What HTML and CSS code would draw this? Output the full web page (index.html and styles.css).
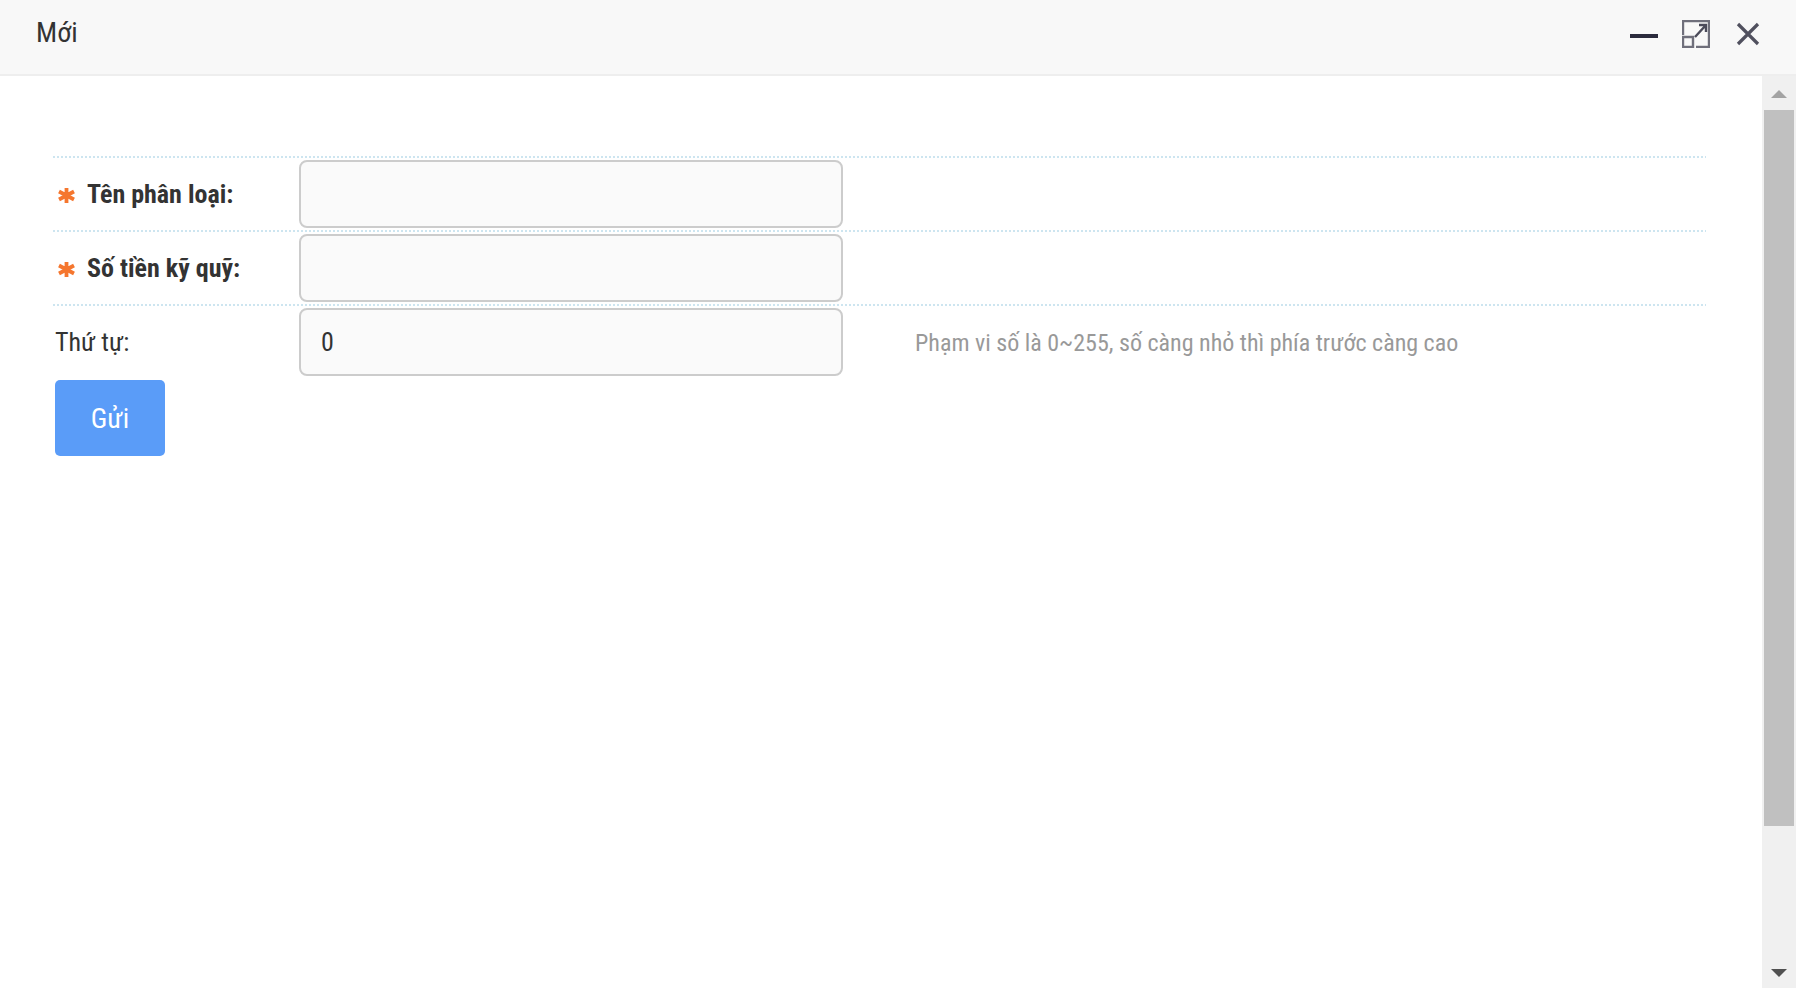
FILE: index.html
```html
<!DOCTYPE html>
<html lang="vi">
<head>
<meta charset="utf-8">
<title>Mới</title>
<link rel="stylesheet" href="styles.css">
</head>
<body>
<div class="dialog">
  <header class="titlebar">
    <span class="title">Mới</span>
    <div class="actions">
      <svg class="icon" viewBox="0 0 28 28"><path d="M0 16h28" stroke="#2b2b3d" stroke-width="4" fill="none"/></svg>
      <svg class="icon" viewBox="0 0 28 28" fill="none" stroke="#6f6f7b" stroke-width="2.4"><path d="M1 15V1h26v26H14"/><path d="M1 17h10v10H1z"/><path d="M13 17L24 5M17 5h7v7" stroke="#4b4b5a"/></svg>
      <svg class="icon close" viewBox="0 0 24 24" fill="none" stroke="#50505e" stroke-width="3.2"><path d="M2 2l20 20M22 2L2 22"/></svg>
    </div>
  </header>
  <div class="body">
    <main class="content">
      <form class="form">
        <div class="row">
          <label class="label strong"><svg class="star" viewBox="0 0 17 15" fill="none" stroke="#f5762e" stroke-width="3.800"><path d="M8.500 0V15M1 3.500L16 11.500M16 3.500L1 11.500"/></svg>Tên phân loại:</label>
          <input class="input" type="text">
        </div>
        <div class="row">
          <label class="label strong"><svg class="star" viewBox="0 0 17 15" fill="none" stroke="#f5762e" stroke-width="3.800"><path d="M8.500 0V15M1 3.500L16 11.500M16 3.500L1 11.500"/></svg>Số tiền kỹ quỹ:</label>
          <input class="input" type="text">
        </div>
        <div class="row">
          <label class="label">Thứ tự:</label>
          <input class="input" type="text" value="0">
          <span class="hint">Phạm vi số là 0~255, số càng nhỏ thì phía trước càng cao</span>
        </div>
        <button class="submit" type="button">Gửi</button>
      </form>
    </main>
    <div class="scrollbar">
      <span class="arrow up"></span>
      <span class="thumb"></span>
      <span class="arrow down"></span>
    </div>
  </div>
</div>
</body>
</html>
```
FILE: styles.css
```css
* { box-sizing: border-box; }
html, body { margin: 0; height: 100%; overflow: hidden; }
body { font-family: "Roboto", "Liberation Sans", sans-serif; font-stretch: 75%; color: #333; background: #fff; }
.dialog { height: 988px; display: flex; flex-direction: column; }
.titlebar { height: 76px; flex: none; background: #f8f8f8; border-bottom: 2px solid #eee; display: flex; align-items: center; justify-content: space-between; padding: 0 36px 6px 36px; }
.title { font-family: "Roboto", "Noto Sans", sans-serif; font-size: 28px; font-stretch: 80%; font-weight: 400; color: #333; margin-bottom: 4px; }
.actions { display: flex; gap: 24px; align-items: center; }
.icon { width: 28px; height: 28px; display: block; }
.close { width: 24px; height: 24px; margin-left: 2px; }
.body { flex: 1; display: flex; min-height: 0; }
.content { flex: 1; padding: 80px 56px 0 53px; }
.row { height: 74.2px; background: repeating-linear-gradient(90deg, #cde5f0 0 2px, transparent 2px 4px) top left / 100% 2px no-repeat; display: flex; align-items: center; padding: 2px 0 0 2px; }
.label { width: 244px; flex: none; font-size: 26px; display: flex; align-items: center; color: #333; }
.strong { font-weight: 700; }
.star { width: 17px; height: 15px; margin: 2px 12px 0 3px; flex: none; }
.input { width: 544px; height: 68px; border: 2px solid #ccc; border-radius: 8px; background: #fafafa; font: 26px "Roboto", sans-serif; font-stretch: 75%; color: #333; padding: 0 20px; outline: none; }
.hint { margin: 2px 0 0 72px; font-size: 24px; color: #999; white-space: nowrap; }
.submit { display: block; margin: 1px 0 0 2px; width: 110px; height: 76px; padding-top: 2px; background: #5a9cf8; border: 0; border-radius: 5px; color: #fff; font: 28px "Roboto", sans-serif; font-stretch: 75%; }
.scrollbar { width: 34px; flex: none; background: #f0f0f0; display: flex; flex-direction: column; align-items: center; position: relative; padding-top: 34px; }
.thumb { width: 30px; height: 716px; background: #c0c0c0; flex: none; }
.arrow { width: 0; height: 0; border-left: 8px solid transparent; border-right: 8px solid transparent; flex: none; }
.up { border-bottom: 8px solid #a3a3a3; position: absolute; top: 14px; }
.down { border-top: 8px solid #505050; position: absolute; bottom: 11px; }
```
